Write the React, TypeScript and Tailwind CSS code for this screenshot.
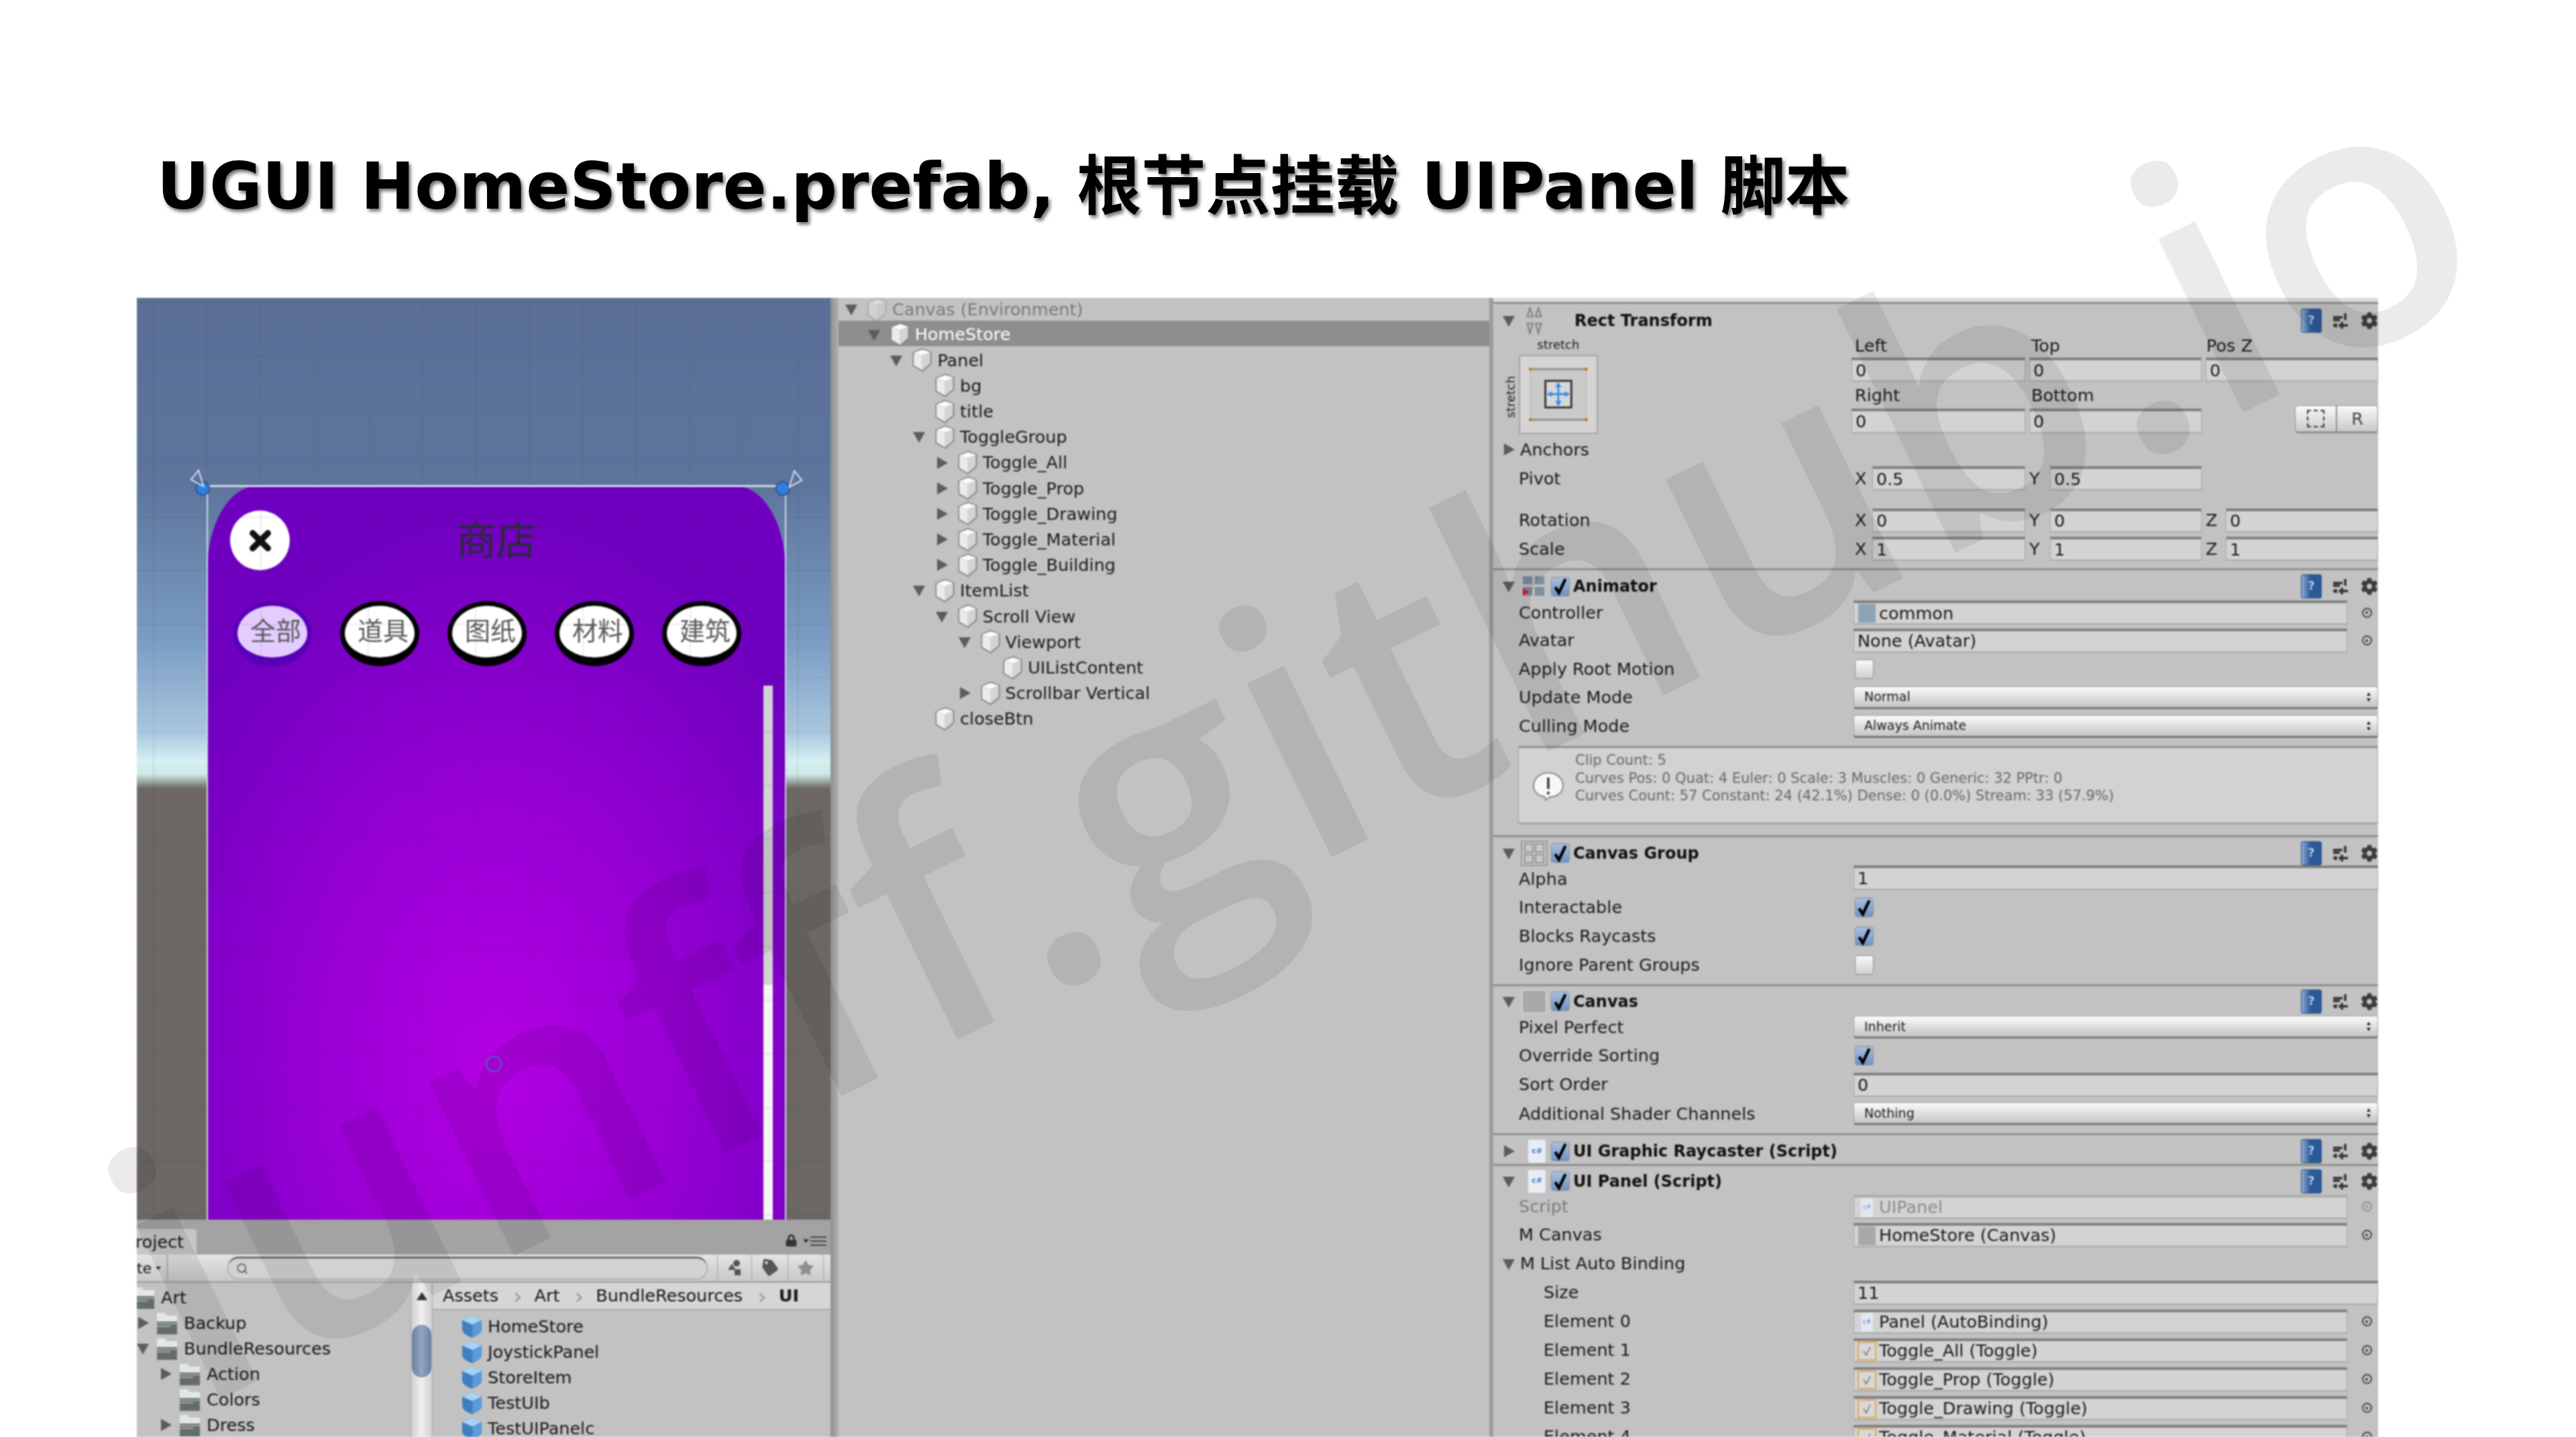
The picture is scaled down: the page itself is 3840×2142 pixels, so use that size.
import type { ReactNode } from 'react';
import clsx from 'clsx';
import { FaCog, FaLock, FaStar, FaTag } from 'react-icons/fa';
import { Search } from 'lucide-react';

const Arrow = ({ open, className }: { open?: boolean; className?: string }) => (
  <svg viewBox="0 0 20 20" className={clsx('w-[20px] h-[20px] shrink-0', className)}>
    <path d={open ? 'M1 3 H19 L10 19 Z' : 'M3 1 L19 10 L3 19 Z'} fill="#5c5c5c" />
  </svg>
);

const Cube = ({ faded }: { faded?: boolean }) => (
  <svg viewBox="0 0 32 36" className={clsx('w-[32px] h-[35px] shrink-0', faded && 'opacity-40')}>
    <path d="M17 1 L30 6 V24 L17 35 L3 27 V7 Z" fill="#d4d4d4" stroke="#858585" strokeWidth="2" strokeLinejoin="round" />
    <path d="M17 2 L29 6 L16 11 L4 7 Z" fill="#fbfbfb" />
    <path d="M4 8 L16 12 V33 L4 26 Z" fill="#ebebeb" />
  </svg>
);

const BlueCube = () => (
  <svg viewBox="0 0 34 36" className="w-[33px] h-[35px] shrink-0">
    <path d="M17 1 L32 8 V22 C32 28 24 32 17 35 C10 32 2 28 2 22 V8 Z" fill="#3f7fc0" />
    <path d="M17 1 L32 8 L18 15 L2 8 Z" fill="#a6d4f5" />
    <path d="M18 15 L32 8 V22 C32 28 24 32 18 34 Z" fill="#5b9bd8" />
  </svg>
);

const Folder = () => (
  <svg viewBox="0 0 34 36" className="w-[34px] h-[36px] shrink-0">
    <path d="M2 3 H14 L17 7 H32 V35 H2 Z" fill="#656c6c" />
    <path d="M2 3 H14 L17 7 H32 V16 H2 Z" fill="#e3e7e7" />
    <path d="M2 19 H32 M2 23 H22" stroke="#a3a9a9" strokeWidth="1.8" />
  </svg>
);

const Target = ({ faded }: { faded?: boolean }) => (
  <div className={clsx('w-[15px] h-[15px] rounded-full border-2 border-[#444] flex items-center justify-center', faded && 'opacity-40')}>
    <div className="w-[4px] h-[4px] rounded-full bg-[#444]" />
  </div>
);

const Check = ({ on, className }: { on?: boolean; className?: string }) => (
  <div
    className={clsx(
      'w-[28px] h-[29px] rounded-[4px] border border-[#8c8c8c] shrink-0 flex items-center justify-center',
      on ? 'bg-[linear-gradient(to_bottom,#a9c0e0,#6f93c6)]' : 'bg-[linear-gradient(to_bottom,#fafafa,#cfcfcf)]',
      className,
    )}
  >
    {on && (
      <svg viewBox="0 0 24 24" className="w-[28px] h-[28px]">
        <path d="M5 13 L10 21 L19 2" fill="none" stroke="#000" strokeWidth="4" />
      </svg>
    )}
  </div>
);

const HeaderTools = () => (
  <div className="ml-auto flex items-center">
    <div className="w-[31px] h-[36px] rounded-[3px] bg-[linear-gradient(to_right,#8eabd2,#2b5a98_45%,#2b5a98)] border border-[#2f4f7d] flex items-center justify-center text-[17px] text-[#b9d0ec]">?</div>
    <svg viewBox="0 0 26 26" className="w-[26px] h-[26px] ml-[15px]">
      <path d="M2 8 H16 M2 12 H12 M20 2 V12 M2 20 H6 M10 20 H24 M15 15 V25 M6 17 V23" stroke="#333" strokeWidth="3.5" />
    </svg>
    <FaCog className="w-[26px] h-[26px] ml-[17px] text-[#3c3c3c]" />
  </div>
);

const ScriptIcon = () => (
  <div className="w-[26px] h-[34px] ml-[8px] bg-[#e9edf3] rounded-[2px] flex items-center justify-center text-[11px] text-[#3b82d6]">c#</div>
);

const GridIcon = ({ kind }: { kind: 'rect' | 'animator' | 'group' | 'canvas' }) => {
  if (kind === 'rect') {
    return (
      <svg viewBox="0 0 40 40" className="w-[44px] h-[42px]">
        <path d="M14 2 L18 14 L10 14 Z M26 2 L30 14 L22 14 Z M10 24 L18 24 L14 38 Z M22 24 L30 24 L26 38 Z" fill="none" stroke="#808080" strokeWidth="2" />
      </svg>
    );
  }
  if (kind === 'animator') {
    return (
      <svg viewBox="0 0 40 34" className="w-[40px] h-[32px]">
        <rect x="2" y="1" width="15" height="13" fill="#7c8d9c" />
        <rect x="21" y="1" width="15" height="13" fill="#7c8d9c" />
        <rect x="2" y="18" width="15" height="14" fill="#7c8d9c" />
        <rect x="21" y="18" width="15" height="14" fill="#7c8d9c" />
        <path d="M2 20 L12 26 L2 32 Z" fill="#d4152a" />
      </svg>
    );
  }
  if (kind === 'group') {
    return (
      <svg viewBox="0 0 40 38" className="w-[40px] h-[38px]">
        <rect x="1" y="1" width="38" height="36" fill="none" stroke="#9a9a9a" strokeWidth="2" />
        <path d="M6 5 H18 V17 H6 Z M22 5 H34 V17 H22 Z M6 21 H18 V33 H6 Z M22 21 H34 V33 H22 Z" fill="#c8c8c8" stroke="#8a8a8a" strokeWidth="1.6" />
      </svg>
    );
  }
  return (
    <div className="w-[38px] h-[36px] border-2 border-[#d0d0d0] bg-[#a9a9a9]" />
  );
};

const Header = ({ title, icon, open = true, className, rect }: { title: string; icon: ReactNode; open?: boolean; className: string; rect?: boolean }) => (
  <div className={clsx('flex items-center pl-[13px] pt-[5px] pr-0 border-t-[3px] border-[#8f8f8f] font-bold text-[24px] text-[#111]', className)}>
    <Arrow open={open} />
    <div className="w-[44px] ml-[6px] shrink-0 flex justify-center">{icon}</div>
    {rect ? <div className="w-[38px] shrink-0" /> : <Check on className="ml-[3px] mr-[5px]" />}
    <span className="whitespace-nowrap">{title}</span>
    <HeaderTools />
  </div>
);

const Prop = ({ label, className, indent, dim, children }: { label: string; className: string; indent?: boolean; dim?: boolean; children?: ReactNode }) => (
  <div className={clsx('flex items-center', className)}>
    <span className={clsx('w-[537px] shrink-0 whitespace-nowrap', indent ? 'pl-[75px]' : 'pl-[38px]', dim && 'text-[#7d7d7d]')}>{label}</span>
    {children}
  </div>
);

const Field = ({ children, className }: { children?: ReactNode; className?: string }) => (
  <div className={clsx('h-[36px] flex items-center px-[5px] bg-[#d3d3d3] border-t-[4px] border-t-[#808080] border-b-[2px] border-b-[#aaaaaa] border-x border-x-[#a5a5a5] whitespace-nowrap overflow-hidden', className)}>
    {children}
  </div>
);

const ObjectField = ({ children, icon, dim }: { children: ReactNode; icon?: ReactNode; dim?: boolean }) => (
  <>
    <Field className={clsx('flex-1', dim && 'text-[#8b8b8b] border-t-[#adadad]')}>
      {icon && <div className="w-[32px] shrink-0 -ml-[2px] mr-[2px] flex justify-center">{icon}</div>}
      {children}
    </Field>
    <div className="w-[46px] flex justify-center pl-[12px]">
      <Target faded={dim} />
    </div>
  </>
);

const Dropdown = ({ children }: { children: string }) => (
  <div className="flex-1 h-[34px] flex items-center justify-between pl-[15px] pr-[9px] rounded-[4px] text-[19px] bg-[linear-gradient(to_bottom,#fbfbfb,#c4c4c4)] border border-[#a0a0a0] border-b-[3px] border-b-[#777]">
    <span>{children}</span>
    <svg viewBox="0 0 8 16" className="w-[8px] h-[18px]">
      <path d="M4 1 L7 6 H1 Z M4 15 L7 10 H1 Z" fill="#222" />
    </svg>
  </div>
);

const VecRow = ({ label, values, className }: { label: string; values: string[]; className: string }) => (
  <div className={clsx('flex items-center', className)}>
    <span className="w-[539px] shrink-0 pl-[38px]">{label}</span>
    <div className="flex items-center w-[254px]">
      <span className="w-[26px] shrink-0">X</span>
      <Field className="flex-1">{values[0]}</Field>
    </div>
    <div className="flex items-center w-[257px] ml-[6px]">
      <span className="w-[31px] shrink-0">Y</span>
      <Field className="flex-1">{values[1]}</Field>
    </div>
    {values[2] && (
      <div className="flex items-center w-[257px] ml-[6px]">
        <span className="w-[30px] shrink-0">Z</span>
        <Field className="flex-1">{values[2]}</Field>
      </div>
    )}
  </div>
);

const ToggleIcon = () => (
  <div className="w-[28px] h-[28px] border-2 border-[#e3a64a] bg-[#d8d8d8] flex items-center justify-center">
    <svg viewBox="0 0 16 16" className="w-[16px] h-[16px]">
      <path d="M3 8 L7 14 L13 2" fill="none" stroke="#777" strokeWidth="1.6" />
    </svg>
  </div>
);

const hierarchy: [string, number, 'open' | 'closed' | 'none'][] = [
  ['Canvas (Environment)', 0, 'open'],
  ['HomeStore', 1, 'open'],
  ['Panel', 2, 'open'],
  ['bg', 3, 'none'],
  ['title', 3, 'none'],
  ['ToggleGroup', 3, 'open'],
  ['Toggle_All', 4, 'closed'],
  ['Toggle_Prop', 4, 'closed'],
  ['Toggle_Drawing', 4, 'closed'],
  ['Toggle_Material', 4, 'closed'],
  ['Toggle_Building', 4, 'closed'],
  ['ItemList', 3, 'open'],
  ['Scroll View', 4, 'open'],
  ['Viewport', 5, 'open'],
  ['UIListContent', 6, 'none'],
  ['Scrollbar Vertical', 5, 'closed'],
  ['closeBtn', 3, 'none'],
];

const folders: [string, number, 'open' | 'closed' | 'none'][] = [
  ['Art', 0, 'none'],
  ['Backup', 1, 'closed'],
  ['BundleResources', 1, 'open'],
  ['Action', 2, 'closed'],
  ['Colors', 2, 'none'],
  ['Dress', 2, 'closed'],
];

const tabs = ['全部', '道具', '图纸', '材料', '建筑'];

const SceneView = () => (
  <div className="relative h-[1374px] overflow-hidden pt-[280px] pl-[105px] bg-[linear-gradient(to_bottom,#5b6f97_0px,#5d759c_280px,#7a9bc3_506px,#a8c6dd_646px,#d4f0f2_690px,#d0e8e8_710px,#6c6763_732px,#6c6763_100%)]">
    <div className="relative w-[862px] h-[1094px] rounded-t-[75px_125px] bg-[radial-gradient(ellipse_560px_820px_at_426px_866px,#b300e3_0%,#9a00d6_45%,#7000c0_100%)]">
      <div className="flex items-center pt-[37px] pl-[34px]">
        <div className="w-[89px] h-[89px] rounded-full bg-white flex items-center justify-center">
          <svg viewBox="0 0 24 24" className="w-[34px] h-[34px]">
            <path d="M4 4 L20 20 M20 4 L4 20" stroke="#111" strokeWidth="6.5" strokeLinecap="round" />
          </svg>
        </div>
        <span className="ml-[248px] text-[60px] leading-none text-[#2a2a38]">商店</span>
      </div>
      <div className="flex gap-[42px] mt-[46px] ml-[38px]">
        {tabs.map((t, i) => (
          <div
            key={t}
            className={clsx(
              'w-[118px] h-[97px] rounded-[50%] border-[7px] border-b-[13px] flex items-center justify-center pl-[10px] text-[38px] whitespace-nowrap text-[#5a5a5a]',
              i === 0 ? 'bg-[#e3ccff] border-[#5a00b5]' : 'bg-white border-black',
            )}
          >
            {t}
          </div>
        ))}
      </div>
      {/* scrollbar of the list */}
      <div className="absolute right-[19px] top-[298px] bottom-0 w-[14px] bg-[linear-gradient(to_bottom,#d2d2d2_0px,#d2d2d2_446px,#f5f5f5_446px)]" />
    </div>
    {/* scene grid */}
    <div className="absolute inset-0 bg-[linear-gradient(to_right,rgba(50,50,60,.09)_2px,transparent_2px),linear-gradient(to_bottom,rgba(50,50,60,.09)_2px,transparent_2px)] bg-[size:80px_80px] bg-[position:24px_6px]" />
    {/* rect gizmo */}
    <div className="absolute left-[104px] top-[279px] w-[864px] h-[1100px] border-x-2 border-t-[3px] border-[#d5d9e6]" />
    <div className="absolute left-[87px] top-[273px] w-[22px] h-[22px] rounded-full bg-[#2f7fe0] border-2 border-[#34538a]" />
    <div className="absolute left-[952px] top-[273px] w-[22px] h-[22px] rounded-full bg-[#2f7fe0] border-2 border-[#34538a]" />
    <svg viewBox="0 0 26 30" className="absolute left-[78px] top-[255px] w-[26px] h-[28px]">
      <path d="M14 2 L2 17 L22 28 Z" fill="none" stroke="#dfe3ea" strokeWidth="2" />
    </svg>
    <svg viewBox="0 0 26 30" className="absolute left-[968px] top-[256px] w-[26px] h-[28px]">
      <path d="M12 2 L24 17 L4 28 Z" fill="none" stroke="#dfe3ea" strokeWidth="2" />
    </svg>
    <div className="absolute left-[520px] top-[1130px] w-[24px] h-[24px] rounded-full border-2 border-[#5a62d8]" />
  </div>
);

const ProjectPanel = () => (
  <div className="flex-1 flex flex-col bg-[#c2c2c2] min-h-0">
    <div className="h-[52px] bg-[#a3a3a3] flex items-end shrink-0">
      <div className="w-[89px] h-[38px] bg-[#c6c6c6] rounded-tr-[4px] flex items-center justify-end pr-[19px] overflow-hidden whitespace-nowrap">
        <span className="shrink-0">Project</span>
      </div>
      <FaLock className="ml-auto mb-[12px] w-[17px] h-[18px] text-[#333]" />
      <div className="ml-[9px] mr-[6px] mb-[13px] flex items-center gap-[2px]">
        <svg viewBox="0 0 8 5" className="w-[9px] h-[6px]"><path d="M0 0 H8 L4 5 Z" fill="#333" /></svg>
        <div className="w-[24px] h-[14px] border-y-2 border-[#444] flex items-center"><div className="w-full h-[2px] bg-[#444]" /></div>
      </div>
    </div>
    <div className="h-[42px] shrink-0 flex items-center bg-[linear-gradient(to_bottom,#e4e4e4,#c8c8c8)] border-b-2 border-b-[#9a9a9a]">
      <div className="w-[46px] h-full flex items-center justify-end gap-[6px] pr-[9px] overflow-hidden whitespace-nowrap border-r border-[#8e8e8e] text-[22px]">
        <span className="shrink-0">Create</span>
        <svg viewBox="0 0 8 5" className="w-[8px] h-[5px] shrink-0"><path d="M0 0 H8 L4 5 Z" fill="#333" /></svg>
      </div>
      <div className="ml-[89px] w-[716px] h-[34px] rounded-full bg-[#d2d2d2] border border-[#9a9a9a] border-t-[3px] border-t-[#6d6d6d] flex items-center pl-[12px]">
        <Search className="w-[18px] h-[18px] text-[#666]" strokeWidth={2.5} />
      </div>
      <div className="ml-[14px] h-full w-[51px] flex items-center justify-center border-l border-[#a5a5a5]">
        <svg viewBox="0 0 24 26" className="w-[24px] h-[26px]">
          <circle cx="15" cy="6" r="5" fill="#555" />
          <path d="M8 7 L14 16 H2 Z" fill="#555" />
          <rect x="12" y="15" width="9" height="9" fill="#555" />
        </svg>
      </div>
      <div className="h-full w-[54px] flex items-center justify-center border-l border-[#a5a5a5]">
        <FaTag className="w-[24px] h-[24px] text-[#555] rotate-[10deg]" />
      </div>
      <div className="h-full w-[54px] flex items-center justify-center border-x border-[#a5a5a5]">
        <FaStar className="w-[24px] h-[24px] text-[#8e8e8e]" />
      </div>
    </div>
    <div className="flex flex-1 min-h-0">
      <div className="w-[408px] pt-[3px] shrink-0 overflow-hidden">
        {folders.map(([name, depth, state]) => (
          <div key={name} className="h-[38px] flex items-center" style={{ marginLeft: depth * 34 - 6 }}>
            {state !== 'none' && <Arrow open={state === 'open'} className="-ml-[29px] mr-[9px]" />}
            <Folder />
            <span className="ml-[8px] whitespace-nowrap">{name}</span>
          </div>
        ))}
      </div>
      <div className="w-[33px] shrink-0 bg-[linear-gradient(to_right,#d0d0d0,#f0f0f0,#d0d0d0)] border-x border-[#a5a5a5] relative">
        <svg viewBox="0 0 16 12" className="absolute left-[8px] top-[14px] w-[16px] h-[12px]"><path d="M8 0 L16 12 H0 Z" fill="#333" /></svg>
        <div className="absolute left-[1px] right-[1px] top-[63px] h-[78px] rounded-full bg-[linear-gradient(to_right,#6b82a3,#93a7c4,#6b82a3)] border border-[#5f7391]" />
      </div>
      <div className="flex-1 min-w-0">
        <div className="h-[41px] flex items-center pl-[15px] bg-[#d6d6d6] border-b-2 border-b-[#adadad] whitespace-nowrap">
          <span>Assets</span>
          <span className="ml-[22px] mr-[18px] text-[34px] leading-none text-[#999]">›</span>
          <span>Art</span>
          <span className="ml-[22px] mr-[18px] text-[34px] leading-none text-[#999]">›</span>
          <span>BundleResources</span>
          <span className="ml-[22px] mr-[18px] text-[34px] leading-none text-[#999]">›</span>
          <span className="font-bold">UI</span>
        </div>
        <div className="pt-[5px] pl-[42px]">
          {['HomeStore', 'JoystickPanel', 'StoreItem', 'TestUIb', 'TestUIPanelc'].map((n) => (
            <div key={n} className="h-[38px] flex items-center gap-[7px]">
              <BlueCube />
              <span>{n}</span>
            </div>
          ))}
        </div>
      </div>
    </div>
  </div>
);

const Hierarchy = () => (
  <div className="w-[972px] shrink-0 bg-[#c2c2c2] border-l-2 border-[#b0b0b0]">
    {hierarchy.map(([name, depth, state], i) => (
      <div
        key={name}
        className={clsx('flex items-center pl-[9px]', i === 0 ? 'h-[34px]' : 'h-[38.2px]', i === 1 && 'bg-[#8e8e8e] text-white', i === 0 && 'text-[#7a7a7a]')}
      >
        <div className={clsx('flex items-center', i > 0 && 'pt-[3px]')} style={{ marginLeft: depth * 33.7 }}>
          <div className="w-[21px] shrink-0">{state !== 'none' && <Arrow open={state === 'open'} />}</div>
          <div className="ml-[11px]"><Cube faded={i === 0} /></div>
          <span className="ml-[7px] whitespace-nowrap">{name}</span>
        </div>
      </div>
    ))}
  </div>
);

const AnchorBox = () => (
  <div className="w-[118px] h-[118px] bg-[#d4d4d4] border-2 border-[#a5a5a5]">
    <svg viewBox="0 0 118 118" className="w-full h-full">
      <rect x="16" y="20" width="86" height="78" fill="#cacaca" stroke="#b0b0b0" />
      <path d="M16 20 H102 M16 98 H102" stroke="#8f8f8f" strokeWidth="3" />
      <circle cx="16" cy="20" r="2.5" fill="#c07a18" />
      <circle cx="102" cy="20" r="2.5" fill="#c07a18" />
      <circle cx="16" cy="98" r="2.5" fill="#c07a18" />
      <circle cx="102" cy="98" r="2.5" fill="#c07a18" />
      <rect x="39" y="38" width="40" height="41" fill="#d8d8d8" stroke="#333" strokeWidth="3" />
      <path d="M59 42 V75 M43 58.500 H75" stroke="#3a8df0" strokeWidth="3" />
      <path d="M59 40 L64 48 H54 Z M59 77 L64 69 H54 Z M41 58.500 L49 54 V63 Z M77 58.500 L69 54 V63 Z" fill="#3a8df0" />
    </svg>
  </div>
);

const Inspector = () => (
  <div className="flex-1 min-w-0 bg-[#c2c2c2] border-l-[6px] border-[#9c9c9c]">
    <div className="h-[6px] bg-[#dcdcdc]" />
    <Header title="Rect Transform" rect icon={<GridIcon kind="rect" />} className="h-[48px] border-t-2" />
    <div className="flex h-[152px]">
      <div className="w-[534px] shrink-0 flex pl-[13px]">
        <div className="w-[25px] pt-[58px] flex justify-center">
          <span className="[writing-mode:vertical-rl] rotate-180 text-[18px] h-[72px] text-center">stretch</span>
        </div>
        <div>
          <div className="h-[31px] flex items-center justify-center text-[18px] w-[118px]">stretch</div>
          <AnchorBox />
        </div>
      </div>
      <div className="grid grid-cols-[259px_257px_257px] grid-rows-[35px_36px_40px_37px] gap-x-[6px]">
        <span className="self-center pl-[5px]">Left</span>
        <span className="self-center pl-[3px]">Top</span>
        <span className="self-center pl-[1px]">Pos Z</span>
        <Field>0</Field>
        <Field>0</Field>
        <Field>0</Field>
        <span className="self-center pl-[5px]">Right</span>
        <span className="self-center pl-[3px]">Bottom</span>
        <span />
        <Field className="h-[37px]">0</Field>
        <Field className="h-[37px]">0</Field>
        <div className="flex justify-end">
          <div className="w-[124px] h-[42px] -mt-[5px] flex rounded-[5px] border border-[#8e8e8e] border-b-[3px] bg-[linear-gradient(to_bottom,#fafafa,#c9c9c9)]">
            <div className="w-[62px] border-r-2 border-[#8e8e8e] flex items-center justify-center">
              <div className="w-[26px] h-[26px] border-2 border-dashed border-[#333]" />
            </div>
            <div className="flex-1 flex items-center justify-center text-[#444]">R</div>
          </div>
        </div>
      </div>
    </div>
    <div className="h-[40px] flex items-center pl-[13px]">
      <Arrow className="w-[18px]" />
      <span className="ml-[7px]">Anchors</span>
    </div>
    <VecRow label="Pivot" values={['0.5', '0.5']} className="h-[46px]" />
    <VecRow label="Rotation" values={['0', '0', '0']} className="h-[41px] mt-[19px]" />
    <VecRow label="Scale" values={['1', '1', '1']} className="h-[44px] mb-[7px]" />

    <Header title="Animator" icon={<GridIcon kind="animator" />} className="h-[46px]" />
    <Prop label="Controller" className="h-[40px]">
      <ObjectField icon={<div className="w-[26px] h-[28px] bg-[#8da4b8]" />}>common</ObjectField>
    </Prop>
    <Prop label="Avatar" className="h-[43px]">
      <ObjectField>None (Avatar)</ObjectField>
    </Prop>
    <Prop label="Apply Root Motion" className="h-[42px]"><Check className="ml-[2px]" /></Prop>
    <Prop label="Update Mode" className="h-[43px]"><Dropdown>Normal</Dropdown></Prop>
    <Prop label="Culling Mode" className="h-[43px]"><Dropdown>Always Animate</Dropdown></Prop>
    <div className="relative mt-[8px] mb-[16px] ml-[37px] h-[117px] bg-[#d2d2d2] rounded-[4px] border border-[#a5a5a5] border-t-[3px] border-t-[#8f8f8f] border-b-[3px] pl-[84px] pt-[5px] text-[21px] leading-[26.5px] text-[#6c6c6c] whitespace-nowrap">
      <svg viewBox="0 0 48 44" className="absolute left-[20px] top-[35px] w-[48px] h-[44px]">
        <path d="M24 2 C36 2 46 10 46 21 C46 32 36 38 26 38 L20 43 L19 38 C9 36 2 31 2 21 C2 10 12 2 24 2 Z" fill="#f7f7f7" stroke="#8a8a8a" strokeWidth="2" />
        <path d="M24 9 V26 M24 30 V34" stroke="#333" strokeWidth="3.500" />
      </svg>
      <div>Clip Count: 5</div>
      <div>Curves Pos: 0 Quat: 4 Euler: 0 Scale: 3 Muscles: 0 Generic: 32 PPtr: 0</div>
      <div>Curves Count: 57 Constant: 24 (42.1%) Dense: 0 (0.0%) Stream: 33 (57.9%)</div>
    </div>

    <Header title="Canvas Group" icon={<GridIcon kind="group" />} className="h-[45px]" />
    <Prop label="Alpha" className="h-[41px]"><Field className="flex-1 h-[37px] self-start">1</Field></Prop>
    <Prop label="Interactable" className="h-[43px]"><Check on className="ml-[2px]" /></Prop>
    <Prop label="Blocks Raycasts" className="h-[43px]"><Check on className="ml-[2px]" /></Prop>
    <Prop label="Ignore Parent Groups" className="h-[43px] mb-[7px]"><Check className="ml-[2px]" /></Prop>

    <Header title="Canvas" icon={<GridIcon kind="canvas" />} className="h-[43px]" />
    <Prop label="Pixel Perfect" className="h-[42px]"><Dropdown>Inherit</Dropdown></Prop>
    <Prop label="Override Sorting" className="h-[43px]"><Check on className="ml-[2px]" /></Prop>
    <Prop label="Sort Order" className="h-[43px]"><Field className="flex-1">0</Field></Prop>
    <Prop label="Additional Shader Channels" className="h-[44px] mb-[7px]"><Dropdown>Nothing</Dropdown></Prop>

    <Header title="UI Graphic Raycaster (Script)" open={false} icon={<ScriptIcon />} className="h-[46px]" />
    <Header title="UI Panel (Script)" icon={<ScriptIcon />} className="h-[43px]" />
    <Prop label="Script" dim className="h-[41px]">
      <ObjectField dim icon={<div className="w-[18px] h-[28px] bg-[#e3e7ee] text-[9px] text-[#5d95d8] flex items-center justify-center">c#</div>}>UIPanel</ObjectField>
    </Prop>
    <Prop label="M Canvas" className="h-[43px]">
      <ObjectField icon={<div className="w-[28px] h-[30px] bg-[#a9a9a9] border border-[#dadada]" />}>HomeStore (Canvas)</ObjectField>
    </Prop>
    <div className="h-[43px] flex items-center pl-[13px]">
      <Arrow open className="w-[18px]" />
      <span className="ml-[7px]">M List Auto Binding</span>
    </div>
    <Prop label="Size" indent className="h-[43px]"><Field className="flex-1">11</Field></Prop>
    <Prop label="Element 0" indent className="h-[43px]">
      <ObjectField icon={<div className="w-[18px] h-[28px] bg-[#e3e7ee] text-[9px] text-[#2f7fd8] flex items-center justify-center">c#</div>}>Panel (AutoBinding)</ObjectField>
    </Prop>
    <Prop label="Element 1" indent className="h-[43px]"><ObjectField icon={<ToggleIcon />}>Toggle_All (Toggle)</ObjectField></Prop>
    <Prop label="Element 2" indent className="h-[43px]"><ObjectField icon={<ToggleIcon />}>Toggle_Prop (Toggle)</ObjectField></Prop>
    <Prop label="Element 3" indent className="h-[43px]"><ObjectField icon={<ToggleIcon />}>Toggle_Drawing (Toggle)</ObjectField></Prop>
    <Prop label="Element 4" indent className="h-[43px]"><ObjectField icon={<ToggleIcon />}>Toggle_Material (Toggle)</ObjectField></Prop>
  </div>
);

export default function App() {
  return (
    <div className="relative w-[3840px] h-[2142px] overflow-hidden bg-white font-['DejaVu_Sans','Noto_Sans_CJK_SC',sans-serif]">
      <h1 className="h-[444px] pl-[234px] pt-[223px] text-[96px] leading-[110px] font-bold whitespace-nowrap text-black [text-shadow:3px_4px_5px_rgba(0,0,0,.55)]">
        UGUI HomeStore.prefab, 根节点挂载 UIPanel 脚本
      </h1>
      <div className="ml-[204px] w-[3341px] h-[1698px] overflow-hidden flex text-[25.5px] text-[#1a1a1a] blur-[0.8px]">
        <div className="w-[1034px] shrink-0 flex flex-col">
          <SceneView />
          <ProjectPanel />
        </div>
        <div className="w-[10px] shrink-0 bg-[linear-gradient(to_right,#8f8f8f,#ababab)]" />
        <Hierarchy />
        <Inspector />
      </div>
      {/* site watermark across the slide */}
      <div className="absolute left-[83px] top-[1680px] origin-top-left -rotate-[26deg] whitespace-nowrap pointer-events-none font-['Open_Sans',sans-serif] font-semibold text-[532px] leading-none text-black/8">
        iunfff.github.io
      </div>
    </div>
  );
}
